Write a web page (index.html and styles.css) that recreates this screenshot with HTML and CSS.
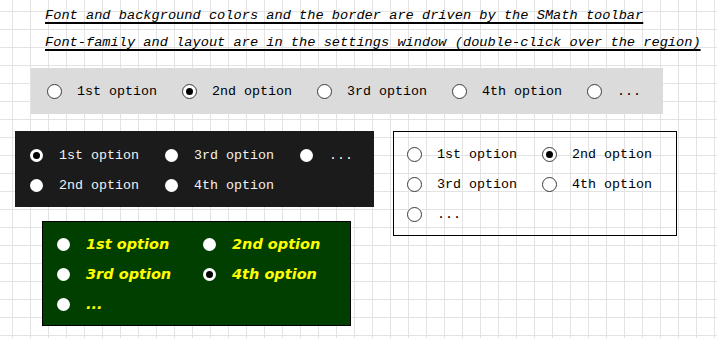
FILE: index.html
```html
<!DOCTYPE html>
<html lang="en">
<head>
    <meta charset="utf-8" />
    <title>Radio button regions</title>
    <link rel="stylesheet" href="styles.css">
</head>
<body>
    <div class="notes">
        <p class="note">Font and background colors and the border are driven by the SMath toolbar</p>
        <p class="note">Font-family and layout are in the settings window (double-click over the region)</p>
    </div>

    <!-- horizontal group -->
    <div class="group group-grey">
        <label class="opt"><span class="radio"></span><span class="txt">1st option</span></label>
        <label class="opt"><span class="radio on"></span><span class="txt">2nd option</span></label>
        <label class="opt"><span class="radio"></span><span class="txt">3rd option</span></label>
        <label class="opt"><span class="radio"></span><span class="txt">4th option</span></label>
        <label class="opt"><span class="radio"></span><span class="txt">...</span></label>
    </div>

    <div class="row">
        <div class="col-left">
            <!-- two rows, filled by column -->
            <div class="group group-dark">
                <label class="opt"><span class="radio solid on"></span><span class="txt">1st option</span></label>
                <label class="opt"><span class="radio solid"></span><span class="txt">2nd option</span></label>
                <label class="opt"><span class="radio solid"></span><span class="txt">3rd option</span></label>
                <label class="opt"><span class="radio solid"></span><span class="txt">4th option</span></label>
                <label class="opt"><span class="radio solid"></span><span class="txt">...</span></label>
            </div>

            <!-- two columns, filled by row -->
            <div class="group group-green">
                <label class="opt"><span class="radio solid"></span><span class="txt">1st option</span></label>
                <label class="opt"><span class="radio solid"></span><span class="txt">2nd option</span></label>
                <label class="opt"><span class="radio solid"></span><span class="txt">3rd option</span></label>
                <label class="opt"><span class="radio solid on"></span><span class="txt">4th option</span></label>
                <label class="opt"><span class="radio solid"></span><span class="txt">...</span></label>
            </div>
        </div>

        <div class="group group-white">
            <label class="opt"><span class="radio"></span><span class="txt">1st option</span></label>
            <label class="opt"><span class="radio on"></span><span class="txt">2nd option</span></label>
            <label class="opt"><span class="radio"></span><span class="txt">3rd option</span></label>
            <label class="opt"><span class="radio"></span><span class="txt">4th option</span></label>
            <label class="opt"><span class="radio"></span><span class="txt">...</span></label>
        </div>
    </div>
</body>
</html>
```

FILE: styles.css
```css
* {margin: 0;padding: 0;box-sizing: border-box;}
html {
    min-height: 100%;
    background-color: #fff;
    background-image: linear-gradient(to right, #e3e3e3 1px, transparent 1px), linear-gradient(to bottom, #e3e3e3 1px, transparent 1px);
    background-size: 18px 18px;
    background-position: 12px 11px;
}
body {font: 13.33px "Liberation Mono", "Courier New", monospace;color: #000;}

/* notes on top */
.notes {padding: 2px 0 0 45px;}
.note {font-size: 13.67px;line-height: 27px;font-style: italic;white-space: nowrap;text-decoration: underline;text-decoration-thickness: 1.5px;text-underline-offset: 3px;}

/* radio groups */
.group {display: flex;}
.opt {display: flex;align-items: center;white-space: nowrap;cursor: pointer;}
.radio {flex: none;width: 15px;height: 15px;border-radius: 50%;background: #fff;border: 1px solid #3a3a3a;margin-right: 15px;display: flex;align-items: center;justify-content: center;}
.radio.on::after {content: "";width: 7px;height: 7px;border-radius: 50%;background: #000;}
.radio.solid {width: 13px;height: 13px;border: 0;margin-right: 16px;}

.group-grey {margin: 12px 0 0 31px;width: 632px;height: 46px;padding-left: 16px;align-items: center;gap: 25px;background: #dbdbdb;}

.row {display: flex;align-items: flex-start;gap: 19px;margin: 17px 0 0 15px;}
.col-left {width: 359px;}

.group-dark {display: grid;grid-template-rows: 30px 30px;grid-auto-flow: column;grid-auto-columns: 135px;padding: 9px 15px 7px;background: #1b1b1b;color: #f2f2f2;}

.group-white {display: grid;grid-template-columns: 135px 135px;grid-auto-rows: 30px;width: 284px;padding: 7px 13px 6px;border: 1px solid #000;}

.group-green {display: grid;grid-template-columns: 146px 146px;grid-auto-rows: 30px;width: 309px;margin: 14px 0 0 27px;padding: 7px 14px 6px;border: 1px solid #000;background: #003f00;color: #ffff00;font: italic bold 14.5px "DejaVu Sans", Verdana, sans-serif;}
```
